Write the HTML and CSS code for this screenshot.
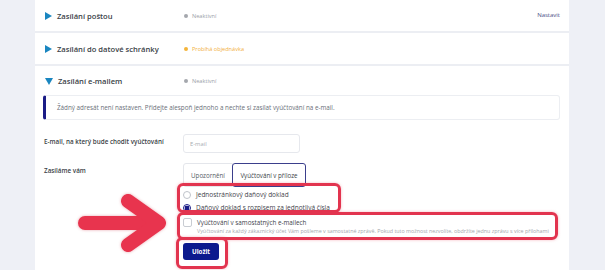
FILE: index.html
```html
<!DOCTYPE html>
<html lang="cs">
<head>
<meta charset="utf-8">
<title>Zasílání vyúčtování</title>
<link rel="stylesheet" href="styles.css">
</head>
<body>
<div class="page">
  <div class="card">
    <div class="row">
      <div class="title">
        <svg class="tri" width="7" height="8" viewBox="0 0 7 8"><path d="M0 0 L7 4 L0 8 Z" fill="#1a86c0"/></svg>
        <span>Zasílání poštou</span>
      </div>
      <div class="status"><span class="dot"></span>Neaktivní</div>
      <a class="action">Nastavit</a>
    </div>
    <div class="row">
      <div class="title">
        <svg class="tri" width="7" height="8" viewBox="0 0 7 8"><path d="M0 0 L7 4 L0 8 Z" fill="#1a86c0"/></svg>
        <span>Zasílání do datové schránky</span>
      </div>
      <div class="status orange"><span class="dot"></span>Probíhá objednávka</div>
    </div>
    <div class="section">
      <div class="row head">
        <div class="title">
          <svg class="tri" width="8" height="7" viewBox="0 0 8 7"><path d="M0 0 L8 0 L4 7 Z" fill="#1a86c0"/></svg>
          <span>Zasílání e-mailem</span>
        </div>
        <div class="status"><span class="dot"></span>Neaktivní</div>
      </div>
      <div class="alert">Žádný adresát není nastaven. Přidejte alespoň jednoho a nechte si zasílat vyúčtování na e-mail.</div>
      <div class="field first">
        <div class="label">E-mail, na který bude chodit vyúčtování</div>
        <div class="control"><div class="input">E-mail</div></div>
      </div>
      <div class="field">
        <div class="label">Zasíláme vám</div>
        <div class="control">
          <div class="toggle">
            <span class="opt">Upozornění</span>
            <span class="opt on">Vyúčtování v příloze</span>
          </div>
          <div class="radios">
            <div class="radio"><span class="circle"></span>Jednostránkový daňový doklad</div>
            <div class="radio"><span class="circle sel"></span>Daňový doklad s rozpisem za jednotlivá čísla</div>
          </div>
          <div class="check">
            <span class="box"></span>
            <div>
              <div class="check-label">Vyúčtování v samostatných e-mailech</div>
              <div class="check-desc">Vyúčtování za každý zákaznický účet Vám pošleme v samostatné zprávě. Pokud tuto možnost nezvolíte, obdržíte jednu zprávu s více přílohami</div>
            </div>
          </div>
          <div class="btnwrap"><span class="btn">Uložit</span></div>
        </div>
      </div>
    </div>
  </div>

  <div class="mark mark-radio"></div>
  <div class="mark mark-check"></div>
  <div class="mark mark-btn"></div>
  <svg class="arrow" width="100" height="70" viewBox="70 190 100 70">
    <g fill="none" stroke="#e8344e" stroke-width="14" stroke-linecap="round" stroke-linejoin="round">
      <line x1="85" y1="223" x2="155" y2="223"/>
      <polyline points="128,201 159,223 128,245"/>
    </g>
  </svg>
</div>
</body>
</html>
```

FILE: styles.css
```css
* { box-sizing: border-box; }
html, body { margin: 0; padding: 0; }
body {
  background: #eef0f6;
  font-family: "Open Sans", "Liberation Sans", sans-serif;
  color: #333a45;
  overflow: hidden;
}
.page {
  position: relative;
  width: 605px;
  height: 270px;
  padding-left: 35px;
  overflow: hidden;
}
.card {
  width: 534px;
  height: 300px;
  background: #ffffff;
  display: flex;
  flex-direction: column;
}
.row {
  height: 33px;
  display: flex;
  align-items: center;
  padding: 0 8px 0 10px;
  border-bottom: 2px solid #eceef3;
}
.row.head {
  height: 29px;
  border-bottom: none;
  padding-top: 1px;
}
.title {
  width: 139px;
  display: flex;
  align-items: center;
  gap: 5px;
  font-size: 7.6px;
  font-weight: 600;
  color: #3a3f47;
}
.tri { flex: none; }
.status {
  display: flex;
  align-items: center;
  gap: 4px;
  font-size: 5.6px;
  color: #9aa0a8;
  flex: 1;
}
.status .dot {
  width: 4px;
  height: 4px;
  border-radius: 50%;
  background: #a4a7ad;
}
.status.orange { color: #f2b043; }
.status.orange .dot { background: #f4b43a; }
.action {
  font-size: 6px;
  color: #4a4f85;
  margin-right: 1px;
  margin-bottom: 2px;
}
.section { display: flex; flex-direction: column; }
.alert {
  margin: 0 9px 0 8px;
  height: 25px;
  border: 1px solid #eceef2;
  border-left: 3px solid #1b1c86;
  border-radius: 3px;
  display: flex;
  align-items: center;
  padding-left: 11px;
  font-size: 6.3px;
  color: #6b7079;
}
.field {
  display: flex;
  padding-left: 9px;
  margin-top: 10px;
}
.field.first { margin-top: 14px; }
.label {
  width: 139px;
  font-size: 6.3px;
  font-weight: 600;
  color: #3a3f47;
  padding-top: 3px;
}
.control { display: flex; flex-direction: column; }
.input {
  width: 117px;
  height: 19px;
  border: 1px solid #e6e8ed;
  border-radius: 3px;
  font-size: 5.8px;
  color: #a7abb2;
  display: flex;
  align-items: center;
  padding-left: 6px;
}
.toggle { display: flex; height: 24px; }
.opt {
  display: flex;
  align-items: center;
  font-size: 6.2px;
  color: #555b64;
  border: 1px solid #e4e6eb;
  border-radius: 3px 0 0 3px;
  padding: 0 7px 0 7px;
  width: 50px;
  justify-content: center;
}
.opt.on {
  width: 74px;
  border: 1.5px solid #3b3f8c;
  border-radius: 3px;
  color: #3a3f47;
  margin-left: -1px;
}
.radios {
  margin-top: 1px;
  display: flex;
  flex-direction: column;
  gap: 4px;
  padding-top: 2px;
}
.radio {
  display: flex;
  align-items: center;
  gap: 5px;
  font-size: 6.5px;
  color: #3f444c;
  height: 9px;
}
.circle {
  width: 8px;
  height: 8px;
  border-radius: 50%;
  border: 1px solid #bfc3ca;
  flex: none;
}
.circle.sel {
  border: 1px solid #1b1c86;
  background: radial-gradient(circle, #1b1c86 0 2.3px, #ffffff 2.6px);
}
.check {
  display: flex;
  gap: 5px;
  margin-top: 6px;
}
.box {
  width: 9px;
  height: 9px;
  border: 1px solid #c8ccd2;
  border-radius: 2px;
  flex: none;
}
.check-label {
  font-size: 6.3px;
  color: #3f444c;
  line-height: 9px;
}
.check-desc {
  font-size: 5.35px;
  color: #a3a7ae;
  margin-top: 0;
  white-space: nowrap;
}
.btnwrap { margin-top: 2px; }
.btn {
  display: inline-flex;
  align-items: center;
  justify-content: center;
  width: 36px;
  height: 17px;
  background: #0c1a8e;
  color: #ffffff;
  font-size: 6.2px;
  font-weight: 700;
  border-radius: 3px;
}
.mark {
  position: absolute;
  border: 3px solid #e2344f;
  border-radius: 6px;
  box-shadow: 0 0 3px rgba(226, 52, 79, 0.35);
}
.mark-radio { left: 177px; top: 183px; width: 164px; height: 30px; }
.mark-check { left: 177px; top: 212px; width: 381px; height: 28px; }
.mark-btn { left: 176px; top: 237px; width: 52px; height: 32px; }
.arrow {
  position: absolute;
  left: 70px;
  top: 190px;
  filter: drop-shadow(0 0 1.5px rgba(200, 40, 60, 0.4));
}
```
